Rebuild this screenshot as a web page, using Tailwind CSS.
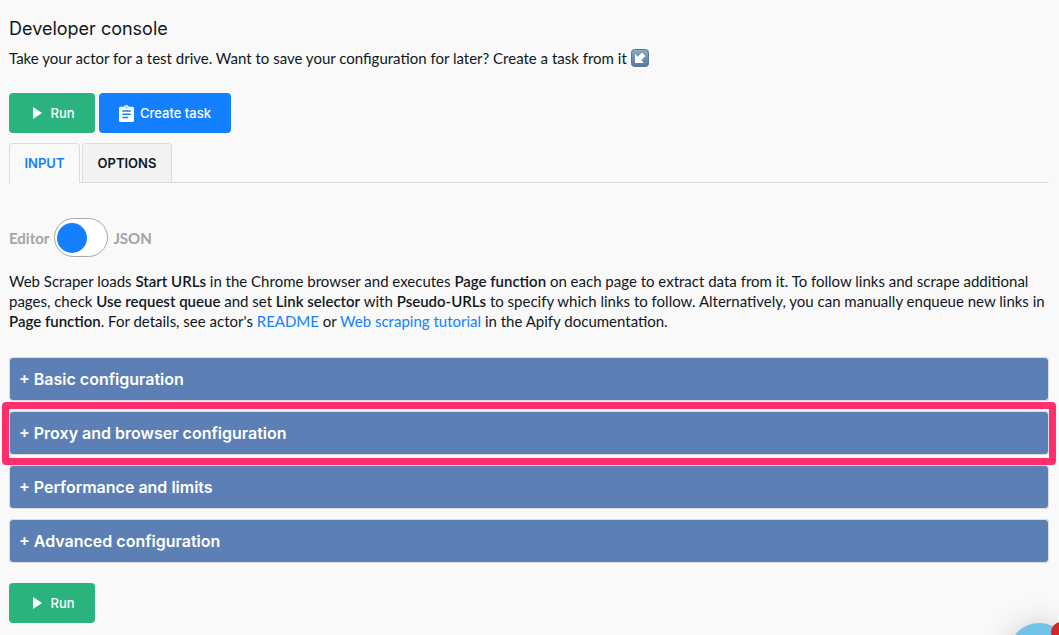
<!DOCTYPE html>
<html lang="en">
<head>
  <meta charset="UTF-8"/>
  <meta name="viewport" content="width=device-width, initial-scale=1.0"/>
  <title>Developer console</title>

  <!-- Tailwind CSS -->
  <script src="https://cdn.jsdelivr.net/npm/@tailwindcss/browser@4"></script>
</head>
<body class="min-h-screen overflow-hidden bg-[#f9f9f9] px-[9px] pt-[17px] pr-[10px] pb-3 font-['Inter',sans-serif] text-sm leading-5 text-[#11171c]">
  <!-- Heading -->
  <header>
    <h1 class="text-lg leading-6">Developer console</h1>
    <p class="mt-[7px] flex items-center gap-1 font-['Lato',sans-serif] text-[15px] leading-5">
      Take your actor for a test drive. Want to save your configuration for later? Create a task from it
      <svg class="h-[18px] w-[18px]" viewBox="0 0 18 18" aria-hidden="true">
        <defs>
          <linearGradient id="tile" x1="0" y1="0" x2="0" y2="1">
            <stop offset="0" stop-color="#8aa9c6"/>
            <stop offset="1" stop-color="#55799f"/>
          </linearGradient>
        </defs>
        <rect x=".5" y=".5" width="17" height="17" rx="3" fill="url(#tile)" stroke="#587798"/>
        <path d="M4 5v9h9l-2.700-2.700L14.500 7 11 3.500 6.700 7.700z" fill="#fff"/>
      </svg>
    </p>
  </header>

  <!-- Actions -->
  <div class="mt-[25px] flex gap-1 text-[13px] font-medium text-white">
    <button class="flex h-10 w-[86px] items-center justify-center gap-2 rounded bg-[#2bb37f] pl-1">
      <svg class="h-3 w-[9px]" viewBox="0 0 9 12" fill="currentColor" aria-hidden="true"><path d="M0 0v12l9-6z"/></svg>
      Run
    </button>
    <button class="flex h-10 w-[132px] items-center justify-center gap-[6px] rounded bg-[#147fff]">
      <svg class="h-[17px] w-[15px]" viewBox="0 0 15 17" aria-hidden="true">
        <path d="M1.500 1.800h3.700a2.400 2.400 0 0 1 4.600 0h3.700A1.500 1.500 0 0 1 15 3.300v12.200a1.500 1.500 0 0 1-1.500 1.500h-12A1.500 1.500 0 0 1 0 15.500V3.300a1.500 1.500 0 0 1 1.500-1.500z" fill="#fff"/>
        <circle cx="7.500" cy="2.300" r=".8" fill="#147fff"/>
        <path d="M3.300 6h8.400M3.300 9.200h8.400M3.300 12.400h5.900" stroke="#147fff" stroke-width="1.500"/>
      </svg>
      Create task
    </button>
  </div>

  <!-- Tabs -->
  <div role="tablist" class="mt-[10px] flex gap-[2px] border-b border-[#dddddd] text-[13px] font-semibold">
    <button role="tab" aria-selected="true" class="-mb-px h-10 w-[71px] rounded-t border border-b-0 border-[#dddddd] bg-[#f9f9f9] pb-px text-[#147fff]">INPUT</button>
    <button role="tab" aria-selected="false" class="h-[39px] w-[90px] rounded-t border border-b-0 border-[#dddddd] bg-[#f3f3f3]">OPTIONS</button>
  </div>

  <!-- Editor / JSON switch -->
  <label class="mt-[35px] flex w-fit items-center gap-[5px] font-['Lato',sans-serif] text-[15px] leading-5 font-bold text-[#a0a5a8]">
    Editor
    <input type="checkbox" role="switch" aria-label="Editor or JSON" class="peer sr-only"/>
    <span class="flex h-[39px] w-[54px] items-center rounded-full border border-[#a5a8aa] bg-white px-[2px] peer-checked:justify-end">
      <span class="h-[30px] w-[30px] rounded-full bg-[#147fff]"></span>
    </span>
    JSON
  </label>

  <p class="mt-[14px] font-['Lato',sans-serif] text-[15px] leading-5">
    Web Scraper loads <b class="font-semibold">Start URLs</b> in the Chrome browser and executes <b class="font-semibold">Page function</b> on each page to extract data from it. To follow links and scrape additional pages, check <b class="font-semibold">Use request queue</b> and set <b class="font-semibold">Link selector</b> with <b class="font-semibold">Pseudo-URLs</b> to specify which links to follow. Alternatively, you can manually enqueue new links in <b class="font-semibold">Page function</b>. For details, see actor's <a href="#readme" class="text-[#147fff]">README</a> or <a href="#tutorial" class="text-[#147fff]">Web scraping tutorial</a> in the Apify documentation.
  </p>

  <!-- Collapsed sections -->
  <div class="mt-[26px] flex flex-col gap-[10px] text-base font-semibold text-white">
    <button class="h-11 rounded border border-[#dddddd] bg-[#5c80b5] px-[9px] text-left">+ Basic configuration</button>
    <div class="relative flex">
      <button class="h-11 flex-1 rounded border border-[#dddddd] bg-[#5c80b5] px-[9px] text-left">+ Proxy and browser configuration</button>
      <div class="pointer-events-none absolute -inset-x-[7px] -top-[9px] -bottom-[10px] z-10 rounded-sm border-[7px] border-[#ff2e6d]"></div>
    </div>
    <button class="h-11 rounded border border-[#dddddd] bg-[#5c80b5] px-[9px] text-left">+ Performance and limits</button>
    <button class="h-11 rounded border border-[#dddddd] bg-[#5c80b5] px-[9px] text-left">+ Advanced configuration</button>
  </div>

  <button class="mt-5 flex h-10 w-[86px] items-center justify-center gap-2 rounded bg-[#2bb37f] pl-1 text-[13px] font-medium text-white">
    <svg class="h-3 w-[9px]" viewBox="0 0 9 12" fill="currentColor" aria-hidden="true"><path d="M0 0v12l9-6z"/></svg>
    Run
  </button>

  <!-- Chat launcher -->
  <button aria-label="Open chat" class="fixed -right-[10px] -bottom-[48px] h-[60px] w-[60px] rounded-full bg-[#70c3e8] shadow-[0_2px_30px_rgba(0,0,0,0.2)]">
    <span class="absolute -top-px -right-[2px] h-5 w-5 rounded-full bg-[#d3262b]"></span>
  </button>
</body>
</html>
